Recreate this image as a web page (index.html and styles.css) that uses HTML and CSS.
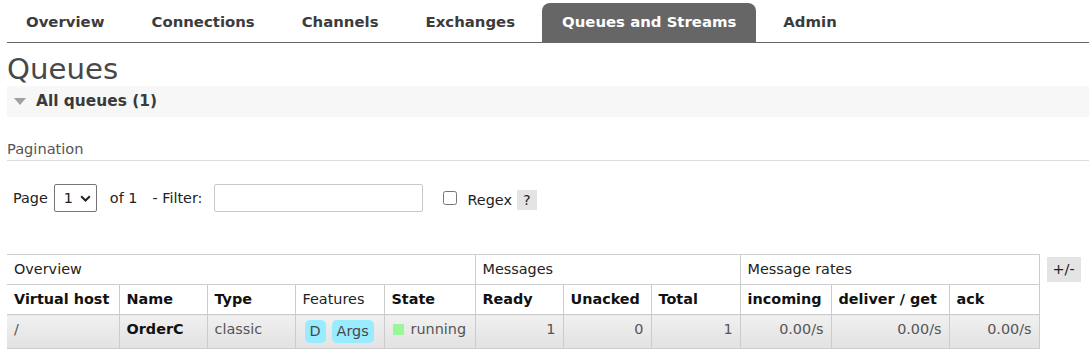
FILE: index.html
```html
<!DOCTYPE html>
<html>
<head>
<meta charset="utf-8">
<title>RabbitMQ Management - Queues</title>
<link rel="stylesheet" href="styles.css">
</head>
<body>
<div class="menu">
  <ul class="tabs">
    <li><a class="tab">Overview</a></li>
    <li><a class="tab">Connections</a></li>
    <li><a class="tab">Channels</a></li>
    <li><a class="tab">Exchanges</a></li>
    <li><a class="tab selected">Queues and Streams</a></li>
    <li><a class="tab">Admin</a></li>
  </ul>
</div>
<h1 class="page-title">Queues</h1>
<div class="section">
  <h2 class="section-title"><span class="tri"></span>All queues (1)</h2>
  <h3 class="pag-title">Pagination</h3>
  <div class="filter-row">
    <span class="lbl-page">Page</span>
    <span class="select-wrap">
      <select class="page-select"><option>1</option></select>
      <svg class="chev" width="11" height="7" viewBox="0 0 11 7"><path d="M1.2 1.2 L5.5 5.5 L9.8 1.2" fill="none" stroke="#222" stroke-width="2"/></svg>
    </span>
    <span class="lbl-of">of 1</span>
    <span class="lbl-filter">- Filter:</span>
    <input class="filter-input" type="text">
    <input class="regex-check" type="checkbox">
    <span class="lbl-regex">Regex</span>
    <span class="help">?</span>
  </div>
  <div class="table-wrap">
    <table class="list">
      <colgroup>
        <col class="c-vh"><col class="c-name"><col class="c-type"><col class="c-feat"><col class="c-state">
        <col class="c-ready"><col class="c-unacked"><col class="c-total">
        <col class="c-in"><col class="c-deliver"><col class="c-ack">
      </colgroup>
      <thead>
        <tr class="group-row">
          <th colspan="5">Overview</th>
          <th colspan="3">Messages</th>
          <th colspan="3">Message rates</th>
        </tr>
        <tr class="head-row">
          <th>Virtual host</th>
          <th>Name</th>
          <th>Type</th>
          <th class="plain">Features</th>
          <th>State</th>
          <th>Ready</th>
          <th>Unacked</th>
          <th>Total</th>
          <th>incoming</th>
          <th>deliver / get</th>
          <th>ack</th>
        </tr>
      </thead>
      <tbody>
        <tr class="data-row">
          <td>/</td>
          <td class="qname">OrderC</td>
          <td>classic</td>
          <td><span class="badge">D</span><span class="badge">Args</span></td>
          <td><span class="status"></span>running</td>
          <td class="num">1</td>
          <td class="num">0</td>
          <td class="num">1</td>
          <td class="num">0.00/s</td>
          <td class="num">0.00/s</td>
          <td class="num">0.00/s</td>
        </tr>
      </tbody>
    </table>
    <span class="plus-minus">+/-</span>
  </div>
</div>
</body>
</html>
```

FILE: styles.css
```css
* { box-sizing: border-box; }
html, body { margin: 0; padding: 0; background: #fff; }
body {
  font-family: "DejaVu Sans", Verdana, sans-serif;
  font-size: 14.4px;
  color: #484848;
  padding-left: 7px;
}

.menu { border-bottom: 1px solid #666; padding-top: 3px; }
.tabs { display: flex; list-style: none; margin: 0; padding: 0; margin-left: -1px; }
.tabs li { margin-right: 7px; }
.tab {
  display: block;
  padding: 0 20px;
  height: 39px;
  line-height: 39px;
  font-size: 14.9px;
  font-weight: bold;
  color: #3c3c3c;
  border-radius: 8px 8px 0 0;
}
.tab.selected { background: #666; color: #fff; }

.page-title {
  margin: 10px 0 0;
  font-size: 29.2px;
  font-weight: normal;
  line-height: 33px;
  color: #484848;
}

.section-title {
  margin: 0;
  height: 31px;
  line-height: 31px;
  padding-left: 7px;
  background: #f7f7f7;
  font-size: 15.4px;
  font-weight: bold;
  color: #3a3a3a;
  display: flex;
  align-items: center;
}
.tri {
  width: 0; height: 0;
  border-left: 6.5px solid transparent;
  border-right: 6.5px solid transparent;
  border-top: 7px solid #a0a0a0;
  margin-right: 10px;
}

.pag-title {
  margin: 23px 0 0;
  font-size: 14.6px;
  font-weight: normal;
  line-height: 17px;
  padding-bottom: 3px;
  border-bottom: 1px solid #ddd;
  color: #555;
}

.filter-row {
  margin-top: 23px;
  height: 28px;
  display: flex;
  align-items: center;
  padding-left: 6px;
  color: #222;
}
.select-wrap {
  position: relative;
  margin-left: 6px;
  width: 43px;
  height: 28px;
}
.page-select {
  -webkit-appearance: none;
  appearance: none;
  width: 43px;
  height: 28px;
  font-family: "DejaVu Sans", Verdana, sans-serif;
  font-size: 14.4px;
  color: #222;
  border: 1px solid #767676;
  border-radius: 2px;
  background: #fff;
  padding: 0 0 0 9px;
}
.chev {
  position: absolute;
  left: 26px;
  top: 11px;
  pointer-events: none;
}
.lbl-of { margin-left: 13px; }
.lbl-filter { margin-left: 15px; }
.filter-input {
  margin: 0 0 0 12px;
  width: 209px;
  height: 28px;
  border: 1px solid #c8c8c8;
  border-radius: 2px;
}
.regex-check {
  margin: 0 0 0 20px;
  width: 14px;
  height: 14px;
}
.lbl-regex { margin-left: 10px; position: relative; top: 2px; }
.help {
  margin-left: 5px;
  width: 20px;
  height: 20px;
  line-height: 20px;
  text-align: center;
  background: #e4e4e4;
  position: relative;
  top: 2px;
}

.table-wrap {
  margin-top: 42px;
  display: flex;
  align-items: flex-start;
}
.list {
  border-collapse: collapse;
  table-layout: fixed;
  width: 1032px;
  flex: none;
}
.c-vh { width: 112px; }
.c-name { width: 88px; }
.c-type { width: 88px; }
.c-feat { width: 89px; }
.c-state { width: 91px; }
.c-ready { width: 88px; }
.c-unacked { width: 88px; }
.c-total { width: 89px; }
.c-in { width: 91px; }
.c-deliver { width: 118px; }
.c-ack { width: 90px; }

.list th, .list td {
  padding: 6px 7px;
  line-height: 17px;
  text-align: left;
  vertical-align: top;
  white-space: nowrap;
  border-right: 1px solid #ccc;
  border-bottom: 1px solid #ccc;
}
.group-row th {
  font-weight: normal;
  color: #222;
  border-top: 1px solid #ccc;
}
.head-row th { font-weight: bold; color: #111; }
.head-row th.plain { font-weight: normal; color: #222; }

.data-row td {
  padding: 3px 7px 5px;
  line-height: 23px;
  background: linear-gradient(#f0f0f0, #e2e2e2);
  color: #555;
}
.data-row td.qname { font-weight: bold; color: #111; }
.data-row td.num { text-align: right; }

.badge {
  display: inline-block;
  height: 23px;
  line-height: 23px;
  padding: 0 5px;
  margin: 2px 6px 0 2px;
  background: #99ebff;
  border-radius: 5px;
  color: #484848;
  vertical-align: top;
}
.badge + .badge { margin-left: 0; }
.status {
  display: inline-block;
  width: 11px;
  height: 11px;
  background: #98f898;
  margin: 0 7px 0 1px;
  vertical-align: -1px;
}

.plus-minus {
  margin: 3px 0 0 7px;
  width: 34px;
  height: 25px;
  line-height: 25px;
  text-align: center;
  background: #e4e4e4;
  color: #222;
}
```
